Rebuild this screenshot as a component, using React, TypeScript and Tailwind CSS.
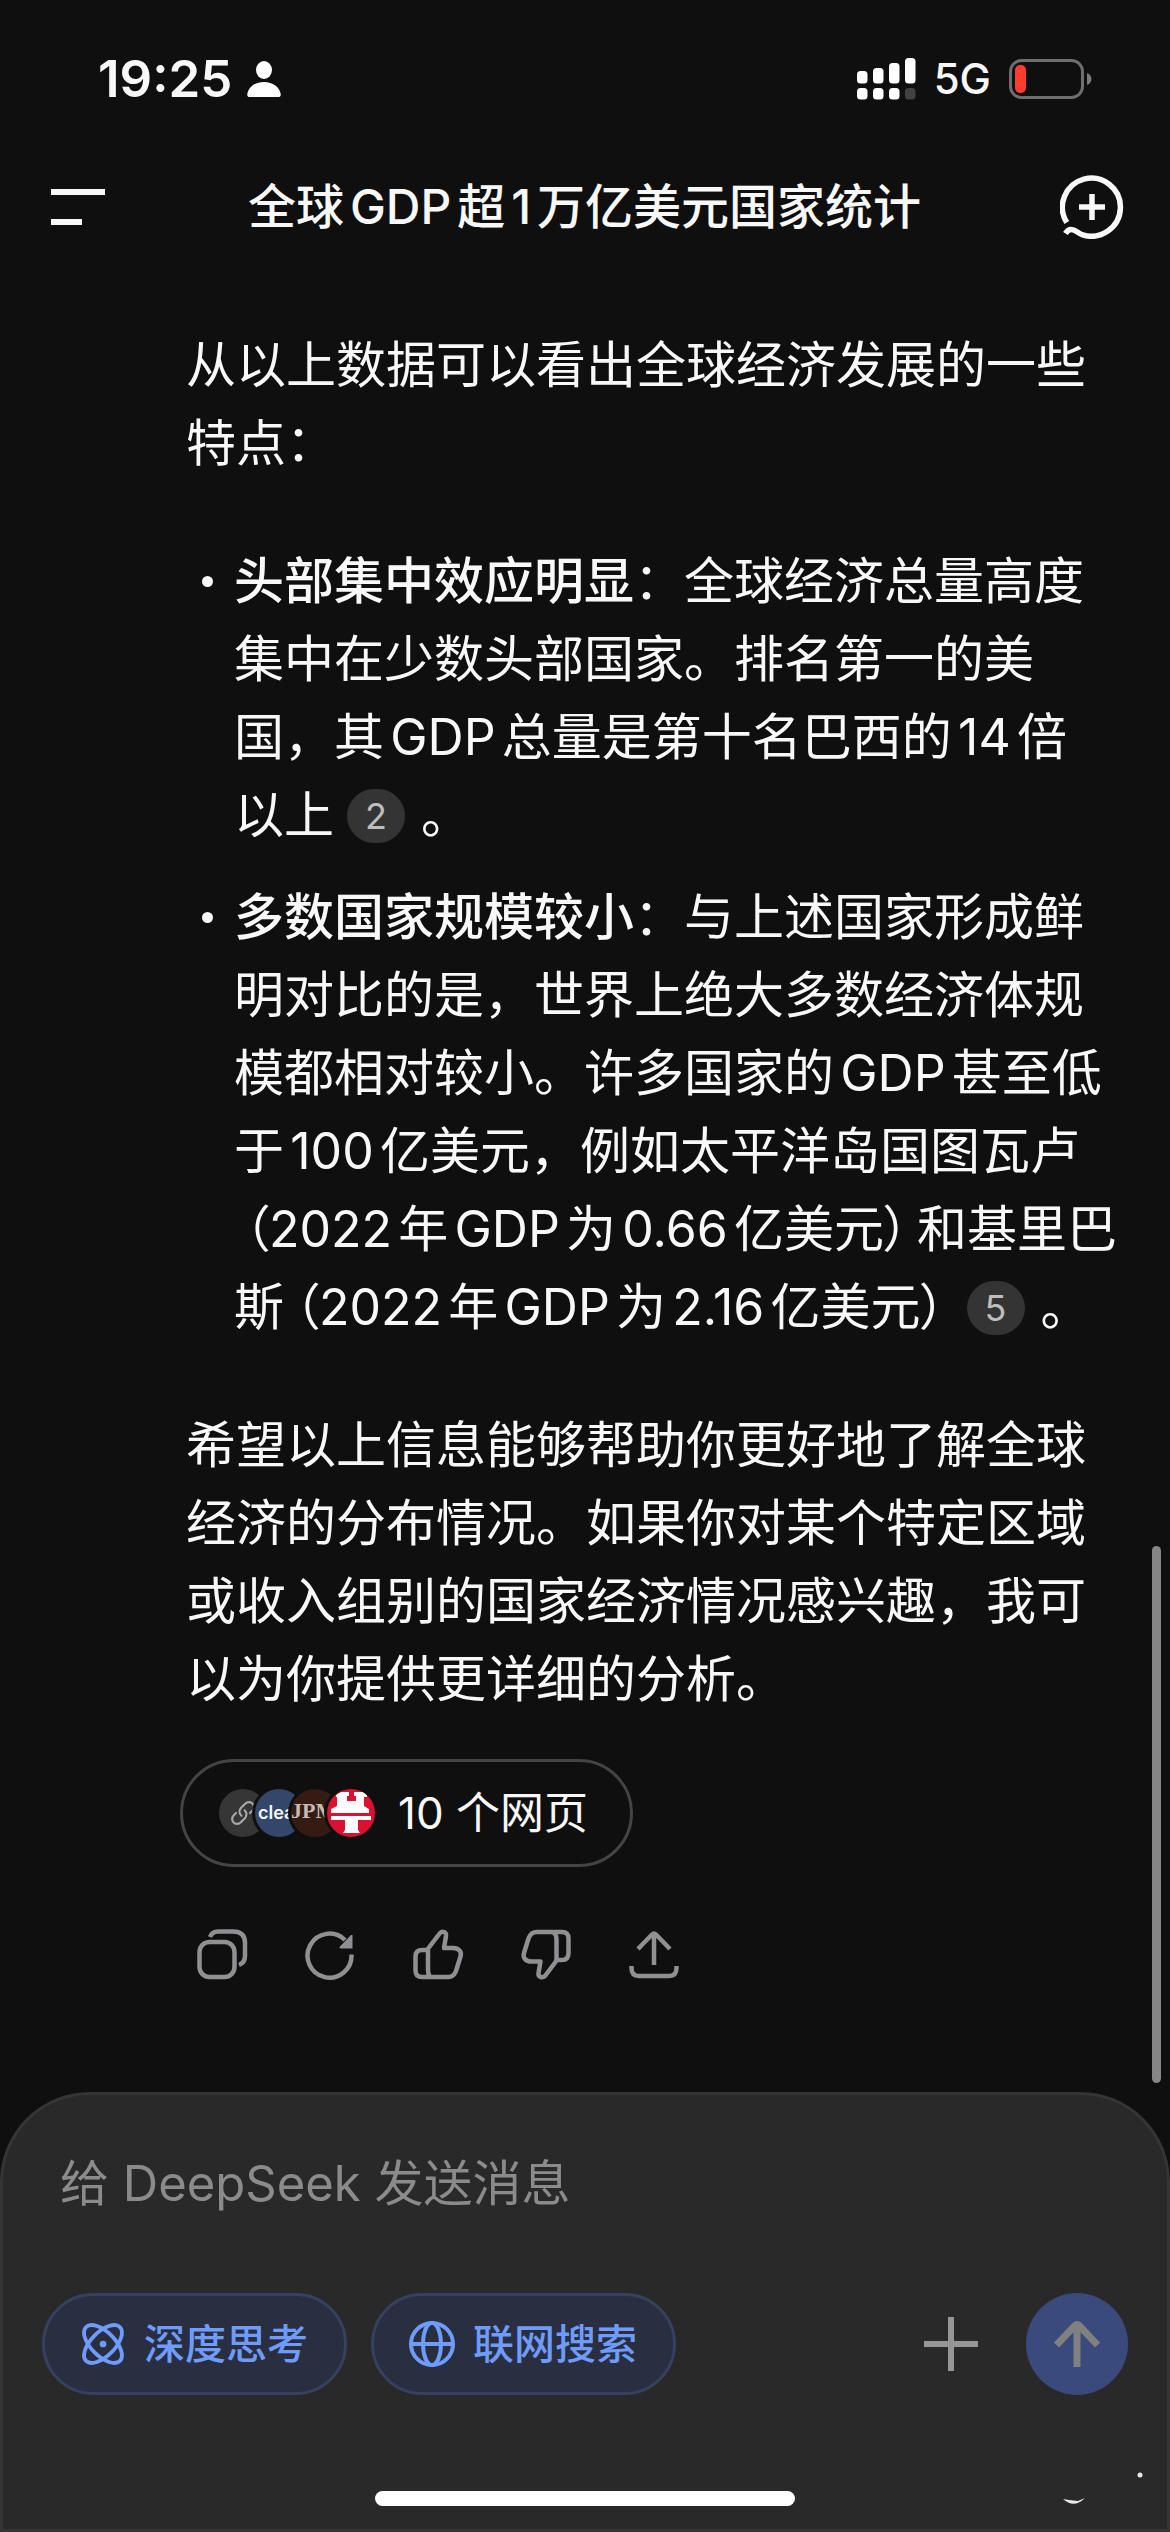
import React from "react";

const FONT = "font-['Inter','Noto_Sans_CJK_SC',sans-serif]";

function StatusBar() {
  return (
    <div className="flex h-[156px] items-center justify-between pt-[2px] pr-[78px] pl-[98px]">
      <div className="flex items-center gap-[15px]">
        <span className="text-[51px] leading-[60px] font-semibold">19:25</span>
        <svg width="34" height="36" viewBox="0 0 34 36" fill="#fff" aria-hidden="true">
          <ellipse cx="17" cy="9" rx="8" ry="9" />
          <path d="M3 36C1 36 0 35 0.300 33C1.500 26 8 21 17 21S32.500 26 33.700 33C34 35 33 36 31 36Z" />
        </svg>
      </div>
      <div className="flex items-center">
        <svg width="59" height="42" viewBox="0 0 59 42" fill="#fff" aria-hidden="true">
          <rect x="0" y="13" width="10.500" height="12.500" rx="3.500" />
          <rect x="16" y="10" width="10.500" height="15.500" rx="3.500" />
          <rect x="32" y="5" width="10.500" height="20.500" rx="3.500" />
          <rect x="48" y="0" width="10.500" height="25.500" rx="3.500" />
          <rect x="0" y="30" width="10.500" height="11.500" rx="3.500" />
          <rect x="16" y="30" width="10.500" height="11.500" rx="3.500" />
          <rect x="32" y="30" width="10.500" height="11.500" rx="3.500" />
          <rect x="48" y="30" width="10.500" height="11.500" rx="3.500" fill="#414141" />
        </svg>
        <span className="ml-[18px] text-[42px] leading-[60px] font-medium">5G</span>
        <svg className="ml-[18px]" width="83" height="40" viewBox="0 0 83 40" fill="none" aria-hidden="true">
          <rect x="1.500" y="1.500" width="72" height="37" rx="11" stroke="#6e6e6e" strokeWidth="3" />
          <path d="M78 14c3 1 4.500 3.500 4.500 6s-1.500 5-4.500 6z" fill="#7a7a7a" />
          <rect x="6" y="6" width="11" height="28" rx="5" fill="#fe3b2f" />
        </svg>
      </div>
    </div>
  );
}

function Header() {
  return (
    <header className="flex h-[102px] items-center justify-between pr-[46px] pl-[51px]">
      <button type="button" aria-label="菜单" className="w-[58px]">
        <svg width="54" height="36" viewBox="0 0 54 36" fill="#f8f8f8">
          <rect x="0" y="0" width="54" height="6" />
          <rect x="0" y="30" width="31" height="6" />
        </svg>
      </button>
      <h1 className="text-[48px] leading-[72px] font-medium whitespace-nowrap">全球GDP超1万亿美元国家统计</h1>
      <button type="button" aria-label="新对话" className="flex w-[64px] justify-end">
        <svg width="64" height="64" viewBox="0 0 64 64" fill="none" stroke="#f8f8f8" strokeWidth="5.500">
          <path d="M6.800 47.500A29 29 0 1 1 22 59.600C17.500 58 15.500 54.500 11 54.500C8.500 54.500 7 56 5.500 58.500" />
          <path d="M32 19v26M19 32h26" />
        </svg>
      </button>
    </header>
  );
}

function Cite({ n }: { n: number }) {
  return (
    <a
      href={"#ref-" + n}
      className="mr-[16px] ml-[13px] inline-flex h-[54px] w-[58px] items-center justify-center rounded-full bg-[#343434] align-[4px] text-[36px] leading-[54px] text-[#bdbdbd]"
    >
      {n}
    </a>
  );
}

function Paren({ children }: { children: React.ReactNode }) {
  return (
    <>
      <span className="pl-[10px] [font-feature-settings:'palt']">（</span>
      {children}
      <span className="pr-[8px] [font-feature-settings:'palt']">）</span>
    </>
  );
}

function Answer() {
  return (
    <article className="text-[50px] leading-[78px]">
      <p>从以上数据可以看出全球经济发展的一些特点：</p>
      <ul className="mt-[60px] flex flex-col gap-[24px]">
        <li className="flex">
          <Bullet />
          <p>
            <strong className="font-medium">头部集中效应明显</strong>
            ：全球经济总量高度集中在少数头部国家。排名第一的美国，其GDP总量是第十名巴西的14倍
            <span className="whitespace-nowrap">
              以上
              <Cite n={2} />。
            </span>
          </p>
        </li>
        <li className="flex">
          <Bullet />
          <p>
            <strong className="font-medium">多数国家规模较小</strong>
            ：与上述国家形成鲜明对比的是，世界上绝大多数经济体规模都相对较小。许多国家的GDP甚至低于100亿美元，例如太平洋岛国图瓦卢
            <Paren>2022年GDP为0.66亿美元</Paren>
            和基里巴斯
            <Paren>2022年GDP为2.16亿美元</Paren>
            <span className="whitespace-nowrap">
              <Cite n={5} />。
            </span>
          </p>
        </li>
      </ul>
      <p className="mt-[60px]">
        希望以上信息能够帮助你更好地了解全球经济的分布情况。如果你对某个特定区域或收入组别的国家经济情况感兴趣，我可以为你提供更详细的分析。
      </p>
    </article>
  );
}

function Bullet() {
  return (
    <span aria-hidden="true" className="flex h-[78px] w-[48px] shrink-0 items-center pl-[16px]">
      <span className="size-[11px] rounded-full bg-[#f8f8f8]" />
    </span>
  );
}

function Sources() {
  const disc = "relative size-[48px] shrink-0 overflow-hidden rounded-full";
  return (
    <button
      type="button"
      className="-ml-[6px] flex h-[108px] items-center self-start rounded-full border-[3px] border-[#444] pr-[42px] pl-[36px]"
    >
      <span className="flex items-center" aria-hidden="true">
        <span className={disc + " flex items-center justify-center bg-[#363636]"}>
          <svg width="26" height="26" viewBox="0 0 24 24" fill="none" stroke="#a8a8a8" strokeWidth="2" strokeLinecap="round">
            <path d="M10.500 14.500C8 12 8.500 9 10.500 7L14 3.500C16 1.500 19 1.500 20.700 3.200S22.500 8 20.500 10L18.500 12" />
            <path d="M13.500 9.500C16 12 15.500 15 13.500 17L10 20.500C8 22.500 5 22.500 3.300 20.800S1.500 16 3.500 14L5.500 12" />
          </svg>
        </span>
        <span className={disc + " -ml-[12px] bg-[#34476a] pl-[3px] text-left text-[18px] leading-[48px] font-semibold ring-3 ring-[#0f0f0f]"}>
          clear
        </span>
        <span className={disc + " -ml-[12px] bg-[#341c12] text-left font-['Liberation_Serif',serif] text-[22px] leading-[44px] font-bold whitespace-nowrap text-[#c4bbb6] ring-3 ring-[#0f0f0f]"}>
          JPM
        </span>
        <span className={disc + " -ml-[12px] bg-[#d8122f] ring-3 ring-[#0f0f0f]"}>
          <svg width="48" height="48" viewBox="0 0 48 48" fill="#fff">
            <path d="M9 6L14 3H22V7H20V12H29V7H27V3H36L40 6V8H37V17L42 20V24H4V20L10 17V8H9Z" />
            <path d="M4 27H44V31H31V41L33 44H16L18 41V31H4Z" />
          </svg>
        </span>
      </span>
      <span className="ml-[23px] text-[44px] leading-[60px]">10 个网页</span>
    </button>
  );
}

function Actions() {
  const common = {
    width: 54,
    height: 54,
    viewBox: "0 0 54 54",
    fill: "none",
    stroke: "#909093",
    strokeWidth: 4.5,
    strokeLinejoin: "round" as const,
  };
  return (
    <div className="mt-[60px] flex gap-[54px] pl-[9px]">
      <button type="button" aria-label="复制">
        <svg {...common}>
          <rect x="4.500" y="15" width="35" height="35" rx="10" />
          <path d="M15 10C16.500 6 19 4.500 23 4.500H38C46 4.500 50 8.500 50 16V29C50 33.500 48 36.500 44 38" />
        </svg>
      </button>
      <button type="button" aria-label="重新生成">
        <svg {...common}>
          <path d="M42 13A22 22 0 1 0 48.500 27.500" />
          <path d="M49.500 8V21.500H38C36.500 21.500 36 20.500 37 19.500L48 8Z" fill="#909093" stroke="none" />
        </svg>
      </button>
      <button type="button" aria-label="赞">
        <svg {...common}>
          <path d="M16 23L29 6C31.500 3.500 35.500 5 35 9L33 21H42C48 21 51 25 49.500 29.500L45 44C43.500 48 41.500 50 37.500 50H11C6.500 50 4.500 48 4.500 43.500V29.500C4.500 25 6.500 23 11 23H16.500" />
          <path d="M19 50C17.500 48 17 46 17 43V23" />
        </svg>
      </button>
      <button type="button" aria-label="踩">
        <svg {...common}>
          <path d="M38 33L26 49C23 51.500 19 50 19.500 46L21.500 34.500H12.500C6.500 34.500 3.500 30.500 5 26L9.500 11.500C11 7 13.500 5 18 5H43C47.500 5 49.500 7 49.500 11.500V26C49.500 30.500 47.500 33 43 33H37.500" />
          <path d="M34 5C37 7 37.500 9 37.500 12V33" />
        </svg>
      </button>
      <button type="button" aria-label="分享">
        <svg {...common}>
          <path d="M27 38V7M11 22L25 7.500Q27 5.500 29 7.500L43 22" />
          <path d="M4.500 39V41C4.500 46.500 7 49 12 49H42C47 49 49.500 46.500 49.500 41V39" />
        </svg>
      </button>
    </div>
  );
}

function Composer() {
  const pill =
    "flex h-[102px] items-center gap-[18px] rounded-full border-[3px] border-[#35415f] bg-[#292f40] pr-[36px] pl-[35px] text-[41px] leading-[60px] font-medium whitespace-nowrap text-[#6f9bfb]";
  return (
    <form
      className="relative flex flex-1 flex-col rounded-t-[90px] border-[3px] border-[#353535] bg-[#292929]"
      onSubmit={(e) => e.preventDefault()}
    >
      <input
        type="text"
        aria-label="给 DeepSeek 发送消息"
        placeholder="给 DeepSeek 发送消息"
        className="mx-[57px] mt-[50px] h-[78px] bg-transparent text-[49px] leading-[78px] outline-none placeholder:text-[#8b8b8b]"
      />
      <div className="mt-[70px] flex items-center pr-[39px] pl-[39px]">
        <button type="button" className={pill}>
          <svg width="46" height="46" viewBox="0 0 48 48" fill="none" stroke="currentColor" strokeWidth="4" aria-hidden="true">
            <ellipse cx="24" cy="24" rx="25" ry="12.500" transform="rotate(45 24 24)" />
            <ellipse cx="24" cy="24" rx="25" ry="12.500" transform="rotate(-45 24 24)" />
            <circle cx="24" cy="24" r="3.500" fill="currentColor" stroke="none" />
          </svg>
          深度思考
        </button>
        <button type="button" className={pill + " ml-[24px]"}>
          <svg width="46" height="46" viewBox="0 0 46 46" fill="none" stroke="currentColor" strokeWidth="4" aria-hidden="true">
            <circle cx="23" cy="23" r="21" />
            <ellipse cx="23" cy="23" rx="9" ry="21" />
            <path d="M2 23h42" />
          </svg>
          联网搜索
        </button>
        <button type="button" aria-label="添加" className="ml-auto">
          <svg width="54" height="54" viewBox="0 0 54 54" stroke="#969696" strokeWidth="6">
            <path d="M27 0v54M0 27h54" />
          </svg>
        </button>
        <button
          type="submit"
          aria-label="发送"
          className="ml-[48px] flex size-[102px] items-center justify-center rounded-full bg-[#3a4a7c]"
        >
          <svg width="46" height="46" viewBox="0 0 46 46" fill="none" stroke="#808080" strokeWidth="7">
            <path d="M23 46V4M2.500 24L20.500 5Q23 2.500 25.500 5L43.500 24" />
          </svg>
        </button>
      </div>
      <div className="mx-auto mt-[96px] h-[15px] w-[36%] rounded-full bg-white" />
      <svg className="absolute right-[22px] bottom-[20px]" width="90" height="40" viewBox="0 0 90 40" aria-hidden="true">
        <path d="M8 30Q19 40 30 29L23 32L14 31Z" fill="#e8e8e8" />
        <circle cx="85" cy="6" r="2.500" fill="#e8e8e8" />
      </svg>
    </form>
  );
}

export default function App() {
  return (
    <div className={FONT + " flex min-h-screen flex-col bg-[#0f0f0f] text-[#f8f8f8] [text-autospace:normal]"} lang="zh-CN">
      <StatusBar />
      <Header />
      <main className="relative flex flex-col pt-[68px] pr-[46px] pb-[111px] pl-[186px]">
        <Answer />
        <div className="mt-[41px] flex flex-col">
          <Sources />
          <Actions />
        </div>
        <div className="absolute right-[9px] bottom-[9px] h-[537px] w-[9px] rounded-full bg-[#868686]" />
      </main>
      <Composer />
    </div>
  );
}
